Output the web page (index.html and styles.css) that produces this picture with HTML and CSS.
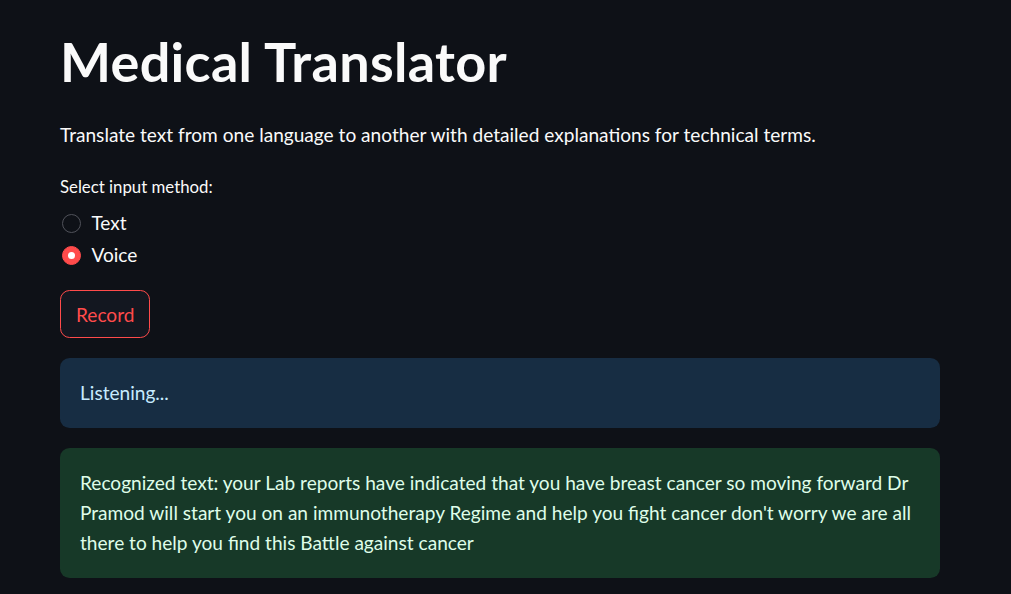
FILE: index.html
```html
<!DOCTYPE html>
<html lang="en">
<head>
<meta charset="utf-8">
<title>Medical Translator</title>
<link rel="stylesheet" href="styles.css">
</head>
<body>
<main class="container">
  <h1 class="title">Medical Translator</h1>
  <p class="subtitle">Translate text from one language to another with detailed explanations for technical terms.</p>
  <div class="radio-group">
    <div class="radio-label">Select input method:</div>
    <div class="radio-options">
      <label class="radio-row"><span class="radio"></span><span class="radio-text">Text</span></label>
      <label class="radio-row"><span class="radio checked"></span><span class="radio-text">Voice</span></label>
    </div>
  </div>
  <button class="btn">Record</button>
  <div class="alert info">Listening...</div>
  <div class="alert success">Recognized text: your Lab reports have indicated that you have breast cancer so moving forward Dr Pramod will start you on an immunotherapy Regime and help you fight cancer don't worry we are all there to help you find this Battle against cancer</div>
</main>
</body>
</html>
```
FILE: styles.css
```css
html, body {
  margin: 0;
  padding: 0;
  background: #0e1117;
  color: #fafafa;
  font-family: Lato, "Noto Sans", sans-serif;
}

.container {
  width: 880px;
  margin-left: 60px;
  display: flex;
  flex-direction: column;
}

.title {
  margin: 30px 0 0;
  font-size: 54px;
  font-weight: 700;
  line-height: 1.2;
  letter-spacing: 0.3px;
  color: #fafafa;
}

.subtitle {
  margin: 26px 0 0;
  font-size: 19.1px;
  line-height: 28.8px;
}

.radio-group {
  margin-top: 24px;
  display: flex;
  flex-direction: column;
}

.radio-label {
  font-size: 16.8px;
  line-height: 25.2px;
}

.radio-options {
  margin-top: 8.5px;
  display: flex;
  flex-direction: column;
}

.radio-row {
  height: 32px;
  display: flex;
  align-items: center;
  gap: 10px;
  padding-left: 2px;
}

.radio {
  width: 19.4px;
  height: 19.4px;
  box-sizing: border-box;
  border-radius: 50%;
  border: 1.5px solid #50525a;
  display: flex;
  align-items: center;
  justify-content: center;
}

.radio.checked {
  background: #ff4b4b;
  border-color: #ff4b4b;
}

.radio.checked::after {
  content: "";
  width: 7.5px;
  height: 7.5px;
  border-radius: 50%;
  background: #ffffff;
}

.radio-text {
  font-size: 19.1px;
  line-height: 28px;
}

.btn {
  margin-top: 19px;
  align-self: flex-start;
  height: 48px;
  padding: 0 15px;
  background: #131720;
  color: #ff4b4b;
  border: 1px solid #ff4b4b;
  border-radius: 9.6px;
  font-family: Lato, "Noto Sans", sans-serif;
  font-size: 19.1px;
}

.alert {
  margin-top: 20px;
  padding: 20px;
  border-radius: 9.6px;
  font-size: 19.1px;
  line-height: 30px;
}

.info {
  background: #172d43;
  color: #c7ebff;
}

.success {
  background: #173928;
  color: #dffde9;
}
```
